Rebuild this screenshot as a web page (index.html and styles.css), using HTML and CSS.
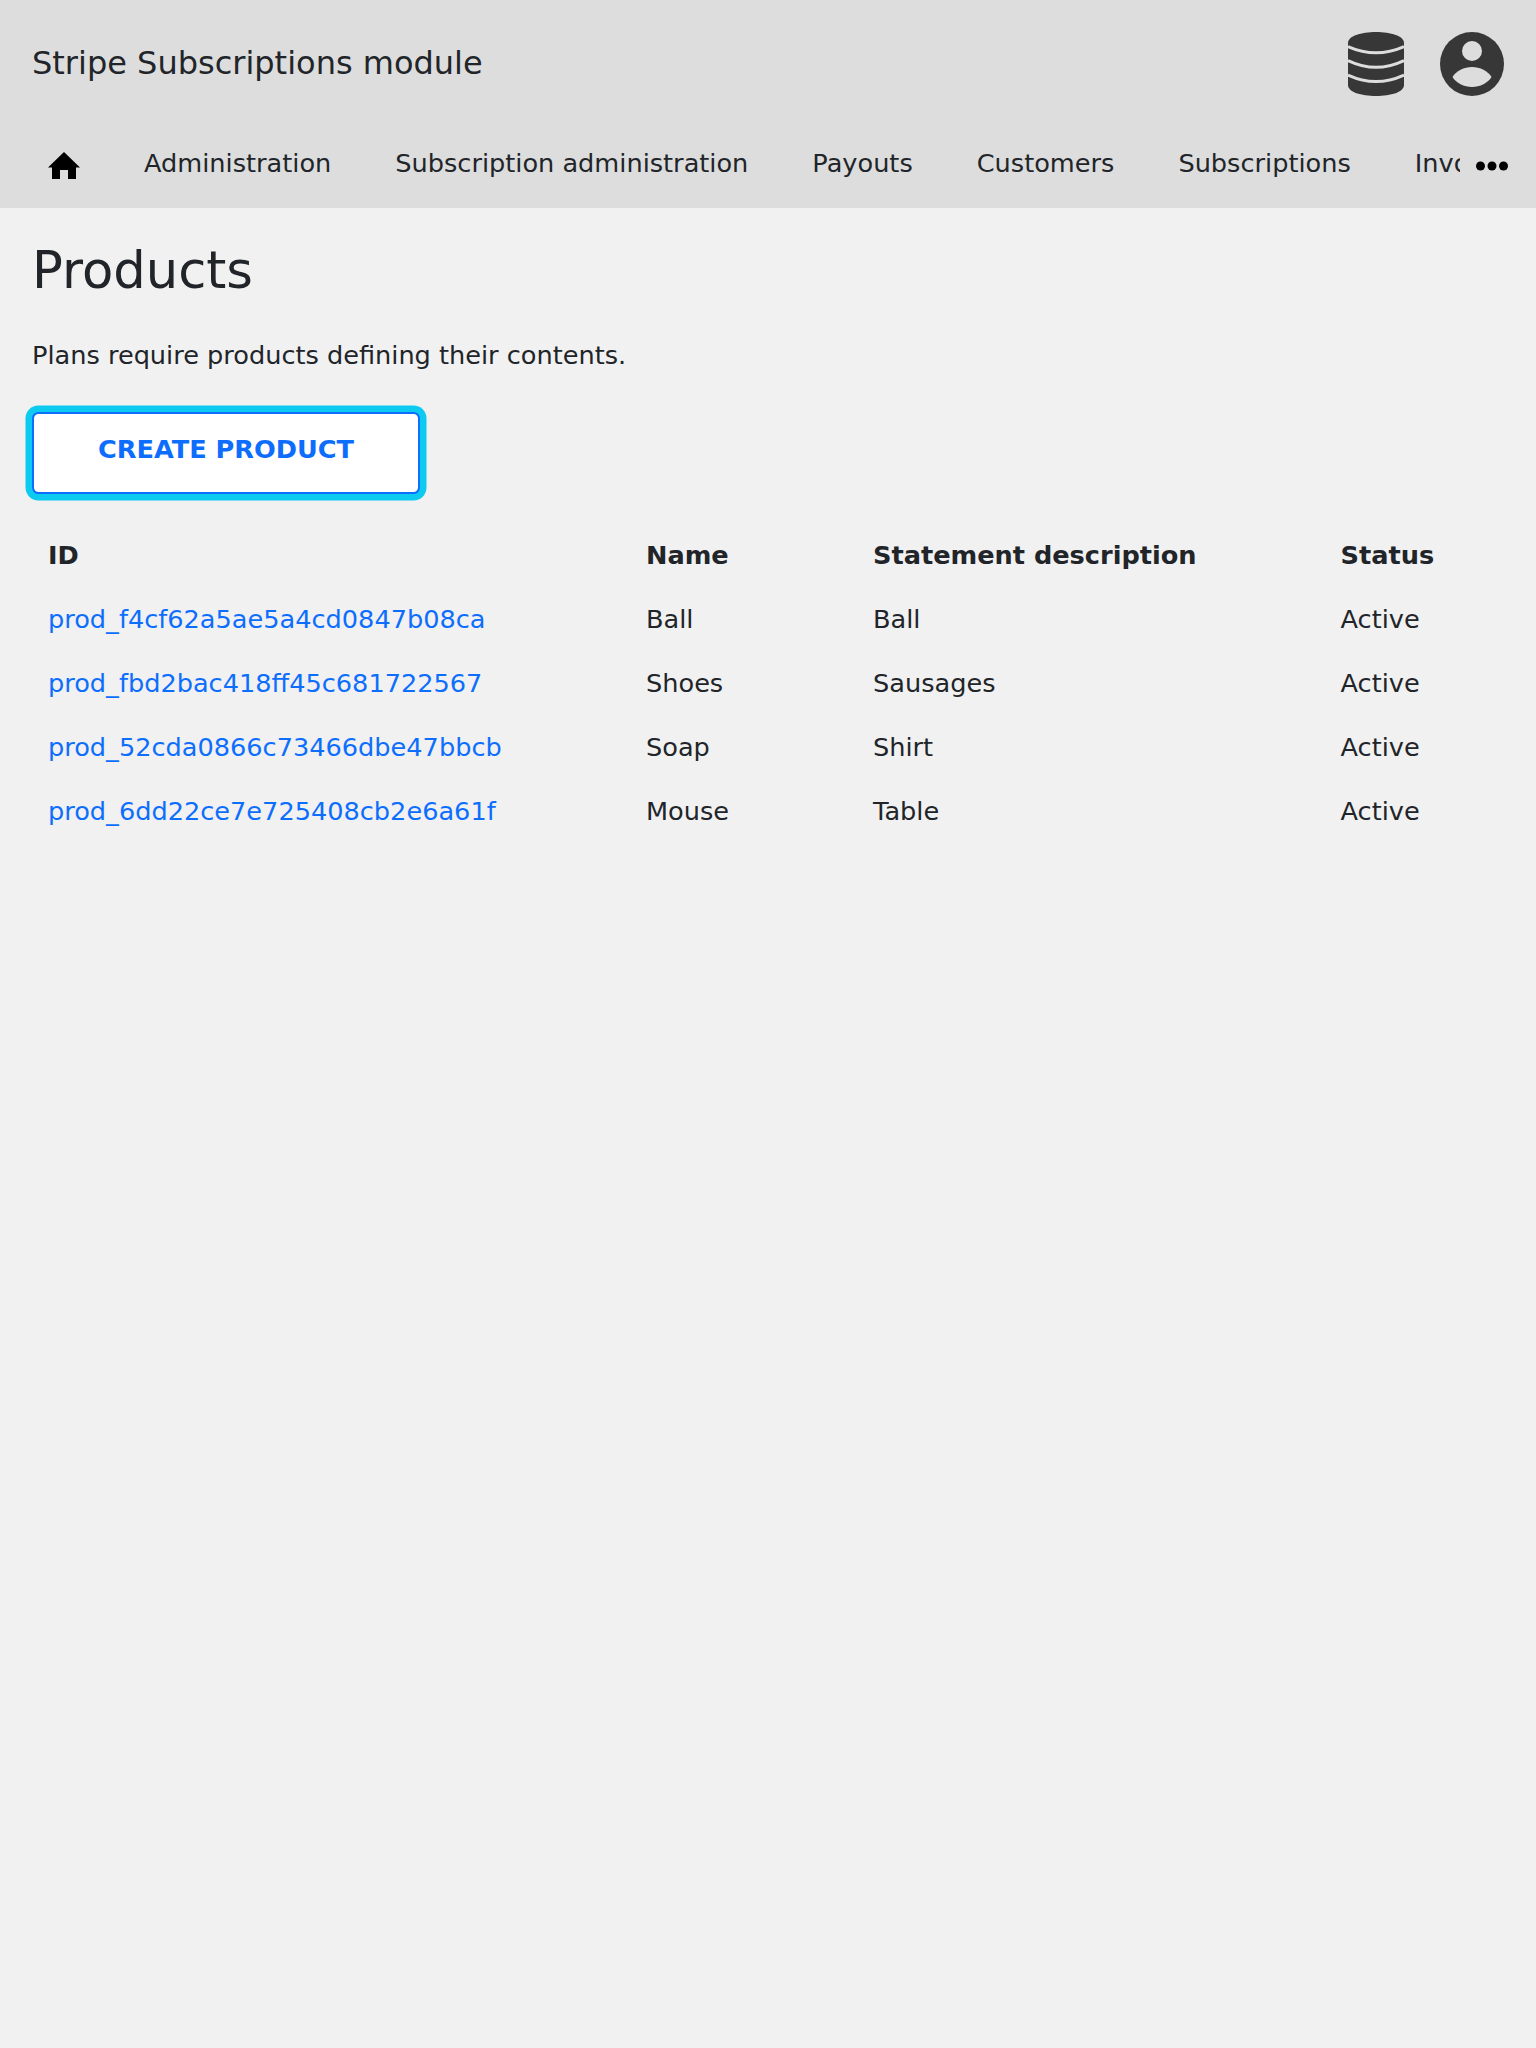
FILE: index.html
```html
<!DOCTYPE html>
<html lang="en">
<head>
<meta charset="utf-8">
<title>Products</title>
<link rel="stylesheet" href="styles.css">
</head>
<body>
<header class="header">
  <div class="topbar">
    <div class="brand">Stripe Subscriptions module</div>
    <div class="actions">
      <svg class="icon-db" viewBox="0 0 56 64" aria-hidden="true">
        <path fill="#373737" d="M0 11C0 4 13 0 28 0S56 4 56 11V53C56 60 43 64 28 64S0 60 0 53Z"/>
        <path class="db-line" d="M0 14.500Q28 27 56 14.500"/>
        <path class="db-line" d="M0 28.500Q28 42 56 28.500"/>
        <path class="db-line" d="M0 43Q28 56 56 43"/>
      </svg>
      <svg class="icon-user" viewBox="0 0 64 64" aria-hidden="true">
        <circle cx="32" cy="32" r="32" fill="#373737"/>
        <circle cx="32" cy="19" r="10" fill="#ddd"/>
        <path fill="#ddd" d="M12.500 45C16 39 24 35 32 35S48 39 51.500 45C48 51 40 55 32 55S16 51 12.500 45Z"/>
      </svg>
    </div>
  </div>
  <nav class="nav">
    <div class="nav-items">
      <a class="nav-home" href="#" aria-label="Home">
        <svg viewBox="0 0 32 28" aria-hidden="true"><path fill="#000" d="M16 0 32 15.500h-4V27h-8v-9h-8v9H4V15.500H0z"/></svg>
      </a>
      <a class="nav-link" href="#">Administration</a>
      <a class="nav-link" href="#">Subscription administration</a>
      <a class="nav-link" href="#">Payouts</a>
      <a class="nav-link" href="#">Customers</a>
      <a class="nav-link" href="#">Subscriptions</a>
      <a class="nav-link" href="#">Invoices</a>
    </div>
    <svg class="nav-more" viewBox="0 0 32 10" aria-hidden="true">
      <circle cx="4.500" cy="5" r="4.500"/><circle cx="16" cy="5" r="4.500"/><circle cx="27.500" cy="5" r="4.500"/>
    </svg>
  </nav>
</header>
<main class="main">
  <h1 class="title">Products</h1>
  <p class="lead">Plans require products defining their contents.</p>
  <a class="btn" href="#">CREATE PRODUCT</a>
  <table class="table">
    <thead>
      <tr><th class="c1">ID</th><th class="c2">Name</th><th class="c3">Statement description</th><th>Status</th></tr>
    </thead>
    <tbody>
      <tr><td><a href="#">prod_f4cf62a5ae5a4cd0847b08ca</a></td><td>Ball</td><td>Ball</td><td>Active</td></tr>
      <tr><td><a href="#">prod_fbd2bac418ff45c681722567</a></td><td>Shoes</td><td>Sausages</td><td>Active</td></tr>
      <tr><td><a href="#">prod_52cda0866c73466dbe47bbcb</a></td><td>Soap</td><td>Shirt</td><td>Active</td></tr>
      <tr><td><a href="#">prod_6dd22ce7e725408cb2e6a61f</a></td><td>Mouse</td><td>Table</td><td>Active</td></tr>
    </tbody>
  </table>
</main>
</body>
</html>
```
FILE: styles.css
```css
* { box-sizing: border-box; }
html, body { margin: 0; min-height: 2048px; }
body {
  background: #f1f1f1;
  color: #212529;
  font-family: "DejaVu Sans", sans-serif;
  font-size: 25.6px;
  line-height: 1.5;
}
a { text-decoration: none; }
.header { background: #ddd; height: 208px; padding: 0 32px; }
.topbar { display: flex; justify-content: space-between; align-items: center; height: 128px; }
.brand { font-size: 32px; margin-bottom: 2px; }
.actions { display: flex; gap: 36px; align-items: center; }
.icon-db { width: 56px; height: 64px; display: block; }
.db-line { fill: none; stroke: #ddd; stroke-width: 3; }
.icon-user { width: 64px; height: 64px; display: block; }
.nav { display: flex; align-items: flex-start; gap: 16px; height: 80px; }
.nav-items { display: flex; width: 1428px; overflow: hidden; flex: none; }
.nav-home { flex: none; width: 64px; margin-right: 16px; padding: 24px 0 0 16px; display: block; color: #000; }
.nav-home svg { width: 32px; height: 28px; display: block; }
.nav-link { flex: none; color: #212529; padding: 19px 32px 13px; line-height: 32px; }
.nav-more { width: 32px; height: 10px; fill: #000; margin-top: 33px; flex: none; }
.main { padding: 32px; }
.title { font-size: 51.2px; font-weight: 400; line-height: 60px; margin: 0 0 36px; }
.lead { margin: 0 0 38px; line-height: 38px; }
.btn {
  display: block;
  width: 388px;
  height: 82px;
  background: #fff;
  border: 2px solid #0d6efd;
  border-radius: 6.4px;
  box-shadow: 0 0 0 6.5px #0dcaf0;
  color: #0d6efd;
  font-weight: 700;
  text-align: center;
  line-height: 71px;
}
.table { border-collapse: collapse; margin-top: 29px; width: 1472px; }
.table th, .table td { padding: 0 16px; height: 64px; text-align: left; vertical-align: middle; }
.table a { color: #0d6efd; }
.c1 { width: 598px; }
.c2 { width: 227px; }
.c3 { width: 467.500px; }
```
